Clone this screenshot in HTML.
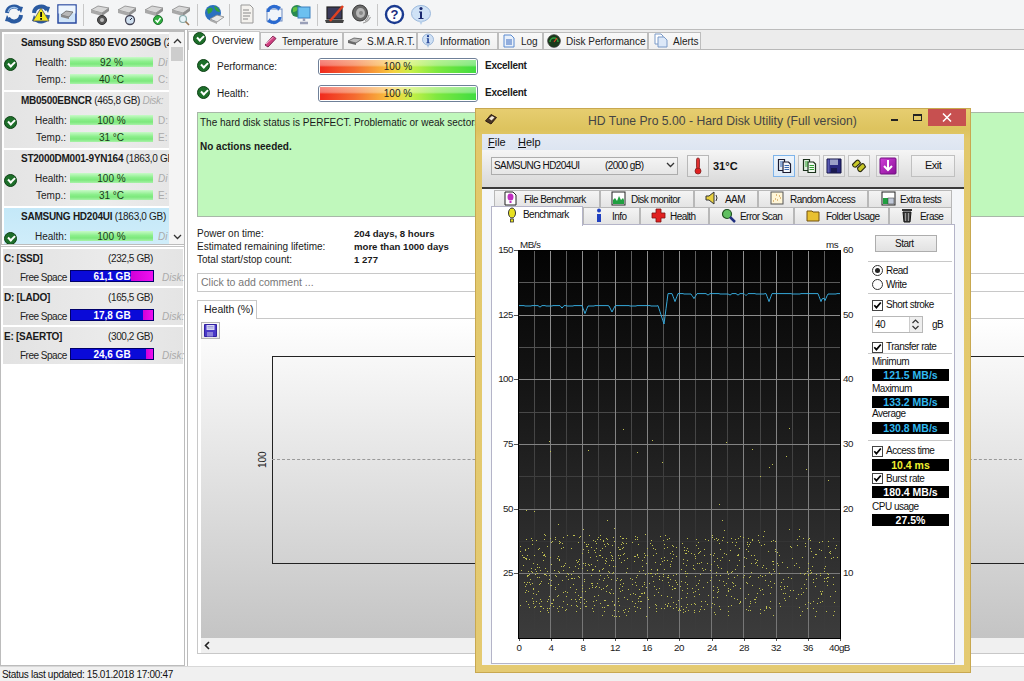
<!DOCTYPE html>
<html><head><meta charset="utf-8">
<style>
*{margin:0;padding:0;box-sizing:border-box}
html,body{width:1024px;height:681px;overflow:hidden;background:#fff;font-family:"Liberation Sans",sans-serif;color:#1a1a1a}
.a{position:absolute}
.t{position:absolute;white-space:nowrap;line-height:1}
/* toolbar */
#tb{left:0;top:0;width:1024px;height:30px;background:#f4f5f6;border-bottom:1px solid #bcbcbc}
.sep{position:absolute;top:4px;width:1px;height:22px;background:#c8c8c8}
/* left */
#lp{left:0;top:30px;width:185px;height:636px;background:#fff;border:1px solid #bcbcbc}
.ent{position:absolute;left:3px;width:164px;background:#e7e7e7}
.chk{position:absolute;width:13px;height:13px;border-radius:50%;background:#1d6f2a;border:1px solid #0e4216}
.chk:after{content:"";position:absolute;left:3px;top:2px;width:5px;height:3px;border-left:2px solid #fff;border-bottom:2px solid #fff;transform:rotate(-45deg)}
.gb{position:absolute;height:10px;background:linear-gradient(#c8fac8,#8cef8c 45%,#7ce87c 70%,#a8f2a8)}
.gb span{position:absolute;left:0;right:0;top:0px;text-align:center;font-size:10px;color:#1a3a1a;line-height:11px}
.bn{font-size:10px;font-weight:bold;letter-spacing:-0.25px}
.lbl{font-size:10px;color:#222}
.dk{font-size:10px;color:#aaa;font-style:italic}
.vb{position:absolute;height:12px;background:#0a0ad8;border:1px solid #00006a}
.vb span{position:absolute;left:0;right:0;top:0;text-align:center;font-size:10px;font-weight:bold;color:#fff;line-height:11px}
.mg{position:absolute;top:0;bottom:0;right:0;background:linear-gradient(90deg,#d000d8,#f010f0)}
.sz{font-weight:normal;letter-spacing:-0.3px}
#rp{left:187px;top:30px;width:837px;height:636px;background:#fff;border-left:1px solid #bcbcbc}
.tab{position:absolute;top:32px;height:17px;background:linear-gradient(#f8f8f8,#f0f0f0);border:1px solid #bdbdbd;border-bottom:none}
.ptxt{font-size:10px;color:#222}
.pb{width:160px;height:17px;border:1px solid #6f8098;border-radius:3px;padding:1px;background:#fff}
.pb:before{content:"";position:absolute;left:1px;top:1px;right:1px;bottom:1px;background:linear-gradient(rgba(255,255,255,0.45),rgba(255,255,255,0.35) 40%,rgba(255,255,255,0) 55%),linear-gradient(90deg,#f02a1e 0%,#f46a30 22%,#f8a83a 38%,#f6d040 47%,#c8f048 58%,#7ee840 75%,#40dc40 100%)}
.pb span{position:absolute;left:0;right:0;top:2px;z-index:1;text-align:center;font-size:10px;color:#222}
.htab{position:absolute;height:17px;background:linear-gradient(#f4f4f4,#e4e4e4);border:1px solid #b8b8b8;border-bottom:none}
.ht{font-size:10px;color:#111;letter-spacing:-0.55px}
.cl{font-size:9.8px;color:#1a1a1a;letter-spacing:-0.5px}
.sp{font-size:10px;color:#111;letter-spacing:-0.5px}
.hl{left:868px;width:84px;height:1px;background:#c8c8c8}
.cb{position:absolute;left:872px;width:11px;height:11px;border:1px solid #444;background:#fff}

.bx{position:absolute;left:872px;width:77px;height:12px;background:#000;font-size:10.5px;font-weight:bold;text-align:center;line-height:12px}
#status{left:0;top:666px;width:1024px;height:15px;background:#f0f0f0;border-top:1px solid #d8d8d8}
</style></head><body>

<!-- toolbar -->
<div id="tb" class="a">
 <div class="sep" style="left:83px"></div>
 <div class="sep" style="left:197px"></div>
 <div class="sep" style="left:229px"></div>
 <div class="sep" style="left:317px"></div>
 <div class="sep" style="left:377px"></div>
</div>

<!-- toolbar icons -->
<svg class="a" style="left:3px;top:3px" width="22" height="22" viewBox="0 0 22 22"><path d="M4 10 A7 7 0 0 1 17 7" stroke="#2a5aa0" stroke-width="4" fill="none"/><path d="M14 3 L20 4 L18 10 Z" fill="#2a5aa0"/><path d="M18 12 A7 7 0 0 1 5 15" stroke="#2a5aa0" stroke-width="4" fill="none"/><path d="M8 19 L2 18 L4 12 Z" fill="#2a5aa0"/><path d="M5 9 A6 6 0 0 1 15 6" stroke="#9ac0e8" stroke-width="1.2" fill="none"/></svg>
<svg class="a" style="left:30px;top:3px" width="22" height="22" viewBox="0 0 22 22"><path d="M4 10 A7 7 0 0 1 17 7" stroke="#2a5aa0" stroke-width="4" fill="none"/><path d="M14 3 L20 4 L18 10 Z" fill="#2a5aa0"/><path d="M18 12 A7 7 0 0 1 5 15" stroke="#2a5aa0" stroke-width="4" fill="none"/><path d="M8 19 L2 18 L4 12 Z" fill="#2a5aa0"/><path d="M11 5 L19 18 L3 18 Z" fill="#f2e820" stroke="#555" stroke-width="0.8"/><rect x="10.2" y="9" width="1.8" height="5" fill="#111"/><rect x="10.2" y="15" width="1.8" height="1.8" fill="#111"/></svg>
<svg class="a" style="left:57px;top:4px" width="20" height="20" viewBox="0 0 20 20"><rect x="1" y="1" width="18" height="18" fill="#cfe4f8" stroke="#2a4aa0" stroke-width="1.5"/><rect x="1.5" y="1.5" width="17" height="8" fill="#eef6fe"/><path d="M4 11 L9 7 L16 8 L12 13 Z" fill="#b8b8b8" stroke="#666" stroke-width="0.8"/><path d="M4 11 L12 13 L12 15 L4 13 Z" fill="#888"/></svg>
<svg class="a" style="left:89px;top:3px" width="22" height="23" viewBox="0 0 22 23"><path d="M2 7 L9 3 L20 5 L13 10 Z" fill="#d8d8d8" stroke="#888" stroke-width="0.8"/><path d="M2 7 L13 10 L13 13 L2 10 Z" fill="#a8a8a8"/><path d="M13 10 L20 5 L20 8 L13 13 Z" fill="#909090"/><circle cx="13" cy="17" r="4.5" fill="#555" stroke="#333"/><circle cx="13" cy="17" r="2" fill="#bbb"/></svg>
<svg class="a" style="left:116px;top:3px" width="22" height="23" viewBox="0 0 22 23"><path d="M2 7 L9 3 L20 5 L13 10 Z" fill="#d8d8d8" stroke="#888" stroke-width="0.8"/><path d="M2 7 L13 10 L13 13 L2 10 Z" fill="#a8a8a8"/><path d="M13 10 L20 5 L20 8 L13 13 Z" fill="#909090"/><circle cx="14" cy="17" r="4.5" fill="#cfe0f0" stroke="#445" stroke-width="1.3"/><path d="M14 17 L16 15" stroke="#223" stroke-width="1"/></svg>
<svg class="a" style="left:143px;top:3px" width="22" height="23" viewBox="0 0 22 23"><path d="M2 7 L9 3 L20 5 L13 10 Z" fill="#d8d8d8" stroke="#888" stroke-width="0.8"/><path d="M2 7 L13 10 L13 13 L2 10 Z" fill="#a8a8a8"/><path d="M13 10 L20 5 L20 8 L13 13 Z" fill="#909090"/><circle cx="15" cy="17" r="4.5" fill="#30b040" stroke="#207030"/><path d="M12.5 17 L14.5 19 L17.5 15" stroke="#fff" stroke-width="1.5" fill="none"/></svg>
<svg class="a" style="left:170px;top:3px" width="22" height="23" viewBox="0 0 22 23"><path d="M2 7 L9 3 L20 5 L13 10 Z" fill="#d8d8d8" stroke="#888" stroke-width="0.8"/><path d="M2 7 L13 10 L13 13 L2 10 Z" fill="#a8a8a8"/><path d="M13 10 L20 5 L20 8 L13 13 Z" fill="#909090"/><circle cx="13" cy="16" r="3.5" fill="#e8f4f8" stroke="#8aa" stroke-width="1.2"/><path d="M15.5 18.5 L19 22" stroke="#997755" stroke-width="1.6"/></svg>
<svg class="a" style="left:203px;top:3px" width="22" height="23" viewBox="0 0 22 23"><circle cx="10" cy="10" r="8" fill="#2a70c0"/><path d="M4 6 Q8 3 10 6 Q9 10 5 11 Z M11 3 Q16 4 17 9 Q13 9 12 6Z" fill="#30a040"/><path d="M7 16 L14 12 L21 14 L14 19 Z" fill="#e8e8e8" stroke="#888" stroke-width="0.8"/><path d="M7 16 L14 19 L14 21 L7 18 Z" fill="#aaa"/></svg>
<svg class="a" style="left:240px;top:4px" width="14" height="20" viewBox="0 0 14 20"><path d="M1 1 H10 L13 4 V19 H1 Z" fill="#f4f2ee" stroke="#999"/><path d="M3 6H9M3 9H11M3 12H10M3 15H8" stroke="#888" stroke-width="1.2"/></svg>
<svg class="a" style="left:264px;top:3px" width="20" height="22" viewBox="0 0 20 22"><rect x="3" y="6" width="15" height="12" fill="#f0f4fa" stroke="#6a8ac0"/><path d="M4 9 A6 6 0 0 1 14 5" stroke="#2a6ad0" stroke-width="3" fill="none"/><path d="M12 2 L17 4 L14 8Z" fill="#2a6ad0"/><path d="M16 14 A6 6 0 0 1 6 18" stroke="#2a6ad0" stroke-width="3" fill="none"/><path d="M8 21 L3 19 L6 15Z" fill="#2a6ad0"/></svg>
<svg class="a" style="left:290px;top:3px" width="22" height="22" viewBox="0 0 22 22"><circle cx="7" cy="8" r="6" fill="#2a8a50"/><path d="M3 5 Q6 3 8 5 Q7 9 3 9Z" fill="#60c040"/><rect x="8" y="4" width="12" height="11" fill="#6cc0f0" stroke="#3a80c0"/><path d="M14 15 V18 M10 20 H18" stroke="#9aa0b8" stroke-width="2.5"/></svg>
<svg class="a" style="left:325px;top:3px" width="20" height="22" viewBox="0 0 20 22"><rect x="2" y="4" width="15" height="12" fill="#3a3a5a" stroke="#222" stroke-width="1.2"/><path d="M0 17 H19 L18 20 H1Z" fill="#444"/><path d="M5 18 L18 3" stroke="#e04020" stroke-width="2.5"/></svg>
<svg class="a" style="left:351px;top:4px" width="20" height="20" viewBox="0 0 20 20"><ellipse cx="9" cy="9" rx="7.5" ry="8" fill="#6a6a6a" stroke="#3a3a3a"/><ellipse cx="9.5" cy="9" rx="4.5" ry="5" fill="#b8b8b8"/><circle cx="10" cy="9" r="2" fill="#888"/><path d="M14 17 Q17 15 18 11 M12 19 Q17 18 19.5 13" stroke="#a0a0a0" stroke-width="1.2" fill="none"/></svg>
<svg class="a" style="left:384px;top:4px" width="21" height="21" viewBox="0 0 21 21"><circle cx="10.5" cy="10.5" r="8.5" fill="#fff" stroke="#1a3a90" stroke-width="2.4"/><text x="10.5" y="15" text-anchor="middle" font-family="Liberation Sans" font-weight="bold" font-size="13" fill="#1a2a80">?</text></svg>
<svg class="a" style="left:410px;top:4px" width="22" height="22" viewBox="0 0 22 22"><ellipse cx="11" cy="9.5" rx="9.5" ry="8" fill="#cfe2f6" stroke="#9ab8dc"/><path d="M9 17 L11 21 L13 17Z" fill="#b8d0ea"/><circle cx="11" cy="4.5" r="1.6" fill="#1a2a70"/><path d="M9 7.5H12V14H13.5V15H8.5V14H10V8.5H9Z" fill="#1a2a70"/></svg>

<!-- left panel -->
<div id="lp" class="a"></div>
<div class="a" style="left:1px;top:31px;width:184px;height:214px;border:1px solid #bcbcbc;background:#fff;overflow:hidden">
<div class="a" style="left:2px;top:2px;width:165px;height:56px;background:linear-gradient(90deg,#e4e4e4,#ececec 60%,#e6e6e6)"></div>
<div class="t bn" style="left:19px;top:6px">Samsung SSD 850 EVO 250GB <span class="sz">(232,9 GB)</span></div>
<div class="chk" style="left:2px;top:26px"></div>
<div class="t lbl" style="left:33px;top:26px">Health:</div>
<div class="gb" style="left:68px;top:25px;width:83px"><span>92 %</span></div>
<div class="t dk" style="left:156px;top:26px;">Di</div>
<div class="t lbl" style="left:34px;top:43px">Temp.:</div>
<div class="gb" style="left:68px;top:42px;width:83px"><span>40 °C</span></div>
<div class="t dk" style="left:156px;top:43px;font-style:normal;">C:</div>
<div class="a" style="left:2px;top:60px;width:165px;height:56px;background:linear-gradient(90deg,#e4e4e4,#ececec 60%,#e6e6e6)"></div>
<div class="t bn" style="left:19px;top:64px">MB0500EBNCR <span class="sz">(465,8 GB) <i style="color:#aaa">Disk:</i></span></div>
<div class="chk" style="left:2px;top:84px"></div>
<div class="t lbl" style="left:33px;top:84px">Health:</div>
<div class="gb" style="left:68px;top:83px;width:83px"><span>100 %</span></div>
<div class="t dk" style="left:156px;top:84px;font-style:normal;">D:</div>
<div class="t lbl" style="left:34px;top:101px">Temp.:</div>
<div class="gb" style="left:68px;top:100px;width:83px"><span>31 °C</span></div>
<div class="t dk" style="left:156px;top:101px;font-style:normal;">E:</div>
<div class="a" style="left:2px;top:118px;width:165px;height:56px;background:linear-gradient(90deg,#e4e4e4,#ececec 60%,#e6e6e6)"></div>
<div class="t bn" style="left:19px;top:122px">ST2000DM001-9YN164 <span class="sz">(1863,0 GB)</span></div>
<div class="chk" style="left:2px;top:142px"></div>
<div class="t lbl" style="left:33px;top:142px">Health:</div>
<div class="gb" style="left:68px;top:141px;width:83px"><span>100 %</span></div>
<div class="t dk" style="left:156px;top:142px;">Di</div>
<div class="t lbl" style="left:34px;top:159px">Temp.:</div>
<div class="gb" style="left:68px;top:158px;width:83px"><span>31 °C</span></div>
<div class="t dk" style="left:156px;top:159px;font-style:normal;">E:</div>
<div class="a" style="left:2px;top:176px;width:165px;height:56px;background:linear-gradient(#c4e8f8,#d6f0fb)"></div>
<div class="t bn" style="left:19px;top:180px">SAMSUNG HD204UI <span class="sz">(1863,0 GB)</span></div>
<div class="chk" style="left:2px;top:200px"></div>
<div class="t lbl" style="left:33px;top:200px">Health:</div>
<div class="gb" style="left:68px;top:199px;width:83px"><span>100 %</span></div>
<div class="t dk" style="left:156px;top:200px;">Di</div>
<div class="t lbl" style="left:34px;top:217px">Temp.:</div>
<div class="gb" style="left:68px;top:216px;width:83px"><span>31 °C</span></div>
<div class="t dk" style="left:156px;top:217px;font-style:normal;">E:</div>
<div class="a" style="left:167px;top:0;width:16px;height:212px;background:#f4f4f4"></div>
<div class="a" style="left:169px;top:15px;width:12px;height:14px;background:#cdcdcd"></div>
<svg class="a" style="left:171px;top:6px" width="9" height="6" viewBox="0 0 9 6"><path d="M1 5L4.5 1.5L8 5" stroke="#333" stroke-width="1.3" fill="none"/></svg>
<svg class="a" style="left:171px;top:202px" width="9" height="6" viewBox="0 0 9 6"><path d="M1 1L4.5 4.5L8 1" stroke="#333" stroke-width="1.3" fill="none"/></svg>
</div>
<!-- volumes -->
<div class="a" style="left:1px;top:246px;width:184px;height:120px;border-top:1px solid #c4c4c4"></div>
<div class="a" style="left:3px;top:249px;width:180px;height:37px;background:linear-gradient(90deg,#e2e2e2,#ebebeb 60%,#e4e4e4)"></div>
<div class="t bn" style="left:4px;top:254px">C: [SSD]</div>
<div class="t lbl" style="left:103px;width:50px;text-align:right;top:254px;letter-spacing:-0.4px">(232,5 GB)</div>
<div class="t lbl" style="left:20px;top:273px;letter-spacing:-0.5px">Free Space</div>
<div class="vb" style="left:70px;top:270px;width:84px"><div class="mg" style="width:22px"></div><span>61,1 GB</span></div>
<div class="t dk" style="left:162px;top:273px">Disk:</div>
<div class="a" style="left:3px;top:288px;width:180px;height:37px;background:linear-gradient(90deg,#e2e2e2,#ebebeb 60%,#e4e4e4)"></div>
<div class="t bn" style="left:4px;top:293px">D: [LADO]</div>
<div class="t lbl" style="left:103px;width:50px;text-align:right;top:293px;letter-spacing:-0.4px">(165,5 GB)</div>
<div class="t lbl" style="left:20px;top:312px;letter-spacing:-0.5px">Free Space</div>
<div class="vb" style="left:70px;top:309px;width:84px"><div class="mg" style="width:10px"></div><span>17,8 GB</span></div>
<div class="t dk" style="left:162px;top:312px">Disk:</div>
<div class="a" style="left:3px;top:327px;width:180px;height:37px;background:linear-gradient(90deg,#e2e2e2,#ebebeb 60%,#e4e4e4)"></div>
<div class="t bn" style="left:4px;top:332px">E: [SAERTO]</div>
<div class="t lbl" style="left:103px;width:50px;text-align:right;top:332px;letter-spacing:-0.4px">(300,2 GB)</div>
<div class="t lbl" style="left:20px;top:351px;letter-spacing:-0.5px">Free Space</div>
<div class="vb" style="left:70px;top:348px;width:84px"><div class="mg" style="width:7px"></div><span>24,6 GB</span></div>
<div class="t dk" style="left:162px;top:351px">Disk:</div>

<!-- right panel -->
<div id="rp" class="a"></div>
<!-- tabs -->
<div class="a" style="left:188px;top:30px;width:836px;height:19px;background:#ececec"></div>
<div class="a" style="left:188px;top:49px;width:836px;height:1px;background:#b8b8b8"></div>
<div class="tab" style="left:260px;width:83px"></div>
<div class="tab" style="left:343px;width:74px"></div>
<div class="tab" style="left:417px;width:81px"></div>
<div class="tab" style="left:498px;width:45px"></div>
<div class="tab" style="left:543px;width:105px"></div>
<div class="tab" style="left:648px;width:53px"></div>
<div class="a" style="left:188px;top:31px;width:72px;height:19px;background:#fff;border:1px solid #c9c9c9;border-bottom:none"></div>
<div class="chk" style="left:193px;top:32px"></div>
<div class="t ptxt" style="left:212px;top:36px">Overview</div>
<div class="t ptxt" style="left:282px;top:37px">Temperature</div>
<div class="t ptxt" style="left:367px;top:37px">S.M.A.R.T.</div>
<div class="t ptxt" style="left:440px;top:37px">Information</div>
<div class="t ptxt" style="left:521px;top:37px">Log</div>
<div class="t ptxt" style="left:566px;top:37px">Disk Performance</div>
<div class="t ptxt" style="left:673px;top:37px">Alerts</div>
<svg class="a" style="left:263px;top:34px" width="15" height="14" viewBox="0 0 15 14"><path d="M2 11 L10 2 L13 4.5 L5 13 Z" fill="#d04080" stroke="#802050" stroke-width="1"/><path d="M3 10 L10.5 3" stroke="#f8b0d0" stroke-width="1"/></svg>
<svg class="a" style="left:347px;top:36px" width="16" height="10" viewBox="0 0 16 10"><path d="M1 5 L7 2 L15 3 L9 7 Z" fill="#bbb" stroke="#555" stroke-width="0.8"/><path d="M1 5 L9 7 L9 9 L1 7Z" fill="#666"/></svg>
<svg class="a" style="left:422px;top:33px" width="12" height="15" viewBox="0 0 12 15"><ellipse cx="6" cy="6.5" rx="5.5" ry="5.5" fill="#cfe0f4" stroke="#8aaad0" stroke-width="0.8"/><path d="M5 12 L6 15 L7 12Z" fill="#9ab8dc"/><circle cx="6" cy="3.2" r="1.1" fill="#1a3a90"/><path d="M4.8 5.2H6.8V9.5H7.8V10.3H4.3V9.5H5.3V6H4.8Z" fill="#1a3a90"/></svg>
<svg class="a" style="left:503px;top:34px" width="12" height="14" viewBox="0 0 12 14"><path d="M1 1H8L11 4V13H1Z" fill="#e8f0fa" stroke="#5a8ad0"/><path d="M3 6H9M3 8H9M3 10H9" stroke="#3a6ac0"/></svg>
<svg class="a" style="left:547px;top:34px" width="14" height="14" viewBox="0 0 14 14"><circle cx="7" cy="7" r="6.3" fill="#1a3a1a" stroke="#333" stroke-width="0.8"/><path d="M3 8 A4 4 0 0 1 11 8" stroke="#30a040" stroke-width="1.5" fill="none"/><path d="M7 8 L10 4" stroke="#e04020" stroke-width="1.2"/></svg>
<svg class="a" style="left:654px;top:33px" width="14" height="15" viewBox="0 0 14 15"><path d="M1 1H7L9 3V11H1Z" fill="#fff" stroke="#7a9ac8"/><path d="M4 4H10L13 7V14H4Z" fill="#dce8f8" stroke="#7a9ac8"/></svg>
<div class="chk" style="left:197px;top:59px"></div>
<div class="t" style="left:217px;top:62px;font-size:10px">Performance:</div>
<div class="pb a" style="left:318px;top:58px"><span>100 %</span></div>
<div class="t" style="left:485px;top:61px;font-size:10px;font-weight:bold;letter-spacing:-0.25px">Excellent</div>
<div class="chk" style="left:197px;top:86px"></div>
<div class="t" style="left:217px;top:89px;font-size:10px">Health:</div>
<div class="pb a" style="left:318px;top:85px"><span>100 %</span></div>
<div class="t" style="left:485px;top:88px;font-size:10px;font-weight:bold;letter-spacing:-0.25px">Excellent</div>

<div class="a" style="left:197px;top:112px;width:840px;height:105px;background:#c0f8bc;border:1px solid #a8b8a8"></div>
<div class="t" style="left:200px;top:118px;font-size:10px">The hard disk status is PERFECT. Problematic or weak sectors were not found.</div>
<div class="t" style="left:200px;top:142px;font-size:10px;font-weight:bold">No actions needed.</div>

<div class="t" style="left:197px;top:229px;font-size:10px">Power on time:</div>
<div class="t" style="left:197px;top:242px;font-size:10px">Estimated remaining lifetime:</div>
<div class="t" style="left:197px;top:255px;font-size:10px">Total start/stop count:</div>
<div class="t" style="left:354px;top:229px;font-size:9.6px;font-weight:bold">204 days, 8 hours</div>
<div class="t" style="left:354px;top:242px;font-size:9.6px;font-weight:bold">more than 1000 days</div>
<div class="t" style="left:354px;top:255px;font-size:9.6px;font-weight:bold">1 277</div>

<div class="a" style="left:197px;top:273px;width:840px;height:19px;border:1px solid #c8c8c8;background:#fff"></div>
<div class="t" style="left:201px;top:277px;font-size:10.5px;color:#777">Click to add comment ...</div>

<!-- health chart -->
<div class="a" style="left:197px;top:318px;width:840px;height:336px;border:1px solid #c8c8c8;background:#fff"></div>
<div class="a" style="left:197px;top:300px;width:60px;height:19px;border:1px solid #c8c8c8;border-bottom:none;background:#fff"></div>
<div class="t" style="left:204px;top:304px;font-size:10.5px">Health (%)</div>
<div class="a" style="left:201px;top:319px;width:823px;height:319px;background:linear-gradient(#fff,#fafafa 8%,#c4c4c4)"></div>
<div class="a" style="left:201px;top:322px;width:19px;height:17px;border:1px solid #b4b4b4;background:linear-gradient(#fafafa,#e8e8e8)"></div>
<svg class="a" style="left:204px;top:324px" width="13" height="13" viewBox="0 0 13 13"><path d="M0.5 0.5H12.5V12.5H0.5Z" fill="#4a3ac8" stroke="#3020a0"/><rect x="2.5" y="1" width="8" height="5" fill="#d8d8f4"/><path d="M3.5 2.5H9.5M3.5 4H9.5" stroke="#8a8ad0" stroke-width="0.7"/><rect x="3" y="8" width="6" height="4.5" fill="#8a80d8"/></svg>
<div class="a" style="left:272px;top:356px;width:760px;height:208px;border:1px solid #222"></div>
<div class="a" style="left:272px;top:459px;width:760px;height:0;border-top:1px dashed #999"></div>
<div class="t" style="left:258px;top:468px;font-size:10px;transform:rotate(-90deg);transform-origin:0 0;color:#222">100</div>
<div class="a" style="left:201px;top:638px;width:823px;height:15px;background:#f0f0f0"></div>
<svg class="a" style="left:204px;top:641px" width="6" height="9" viewBox="0 0 6 9"><path d="M5 1L1.5 4.5L5 8" stroke="#222" stroke-width="1.6" fill="none"/></svg>

<div id="status" class="a"><div class="t" style="left:2px;top:3px;font-size:10px;color:#111;letter-spacing:-0.3px">Status last updated: 15.01.2018 17:00:47</div></div>
<!-- HD TUNE WINDOW -->
<div class="a" style="left:475px;top:108px;width:496px;height:565px;background:linear-gradient(#e6cd70,#ddc35e 20px,#e2c86a 30px,#e4ca72);border:1px solid #c8a850"></div>
<div class="t" style="left:588px;top:115px;font-size:12.2px;color:#444">HD Tune Pro 5.00 - Hard Disk Utility (Full version)</div>
<!-- title icon -->
<svg class="a" style="left:484px;top:113px" width="14" height="13" viewBox="0 0 14 13"><path d="M1.5 8 L7 1.5 L12.5 4.5 L7 11 Z" fill="#4a3628" stroke="#2a1a10" stroke-width="1"/><path d="M5 5.5 L8 3 L10.5 4.5 L7.5 7.5 Z" fill="#f0e8d8"/></svg>
<div class="a" style="left:891px;top:119px;width:7px;height:2px;background:#222"></div>
<div class="a" style="left:913px;top:114px;width:9px;height:7px;border:1px solid #222;border-top-width:2px"></div>
<div class="a" style="left:928px;top:109px;width:38px;height:17px;background:#c75050"></div>
<svg class="a" style="left:942px;top:113px" width="10" height="9" viewBox="0 0 10 9"><path d="M1 0.5L9 8.5M9 0.5L1 8.5" stroke="#fff" stroke-width="1.5"/></svg>
<!-- client -->
<div class="a" style="left:482px;top:134px;width:482px;height:531px;background:#f7f9fb"></div>
<div class="a" style="left:482px;top:134px;width:482px;height:16px;background:linear-gradient(#e4eaf4,#dde5f1)"></div>
<div class="t" style="left:488px;top:137px;font-size:11px;color:#111"><u>F</u>ile</div>
<div class="t" style="left:518px;top:137px;font-size:11px;color:#111"><u>H</u>elp</div>
<div class="a" style="left:482px;top:150px;width:482px;height:39px;background:linear-gradient(#f5f5f5,#e0e0e0 70%,#d8d8d8);border-bottom:2px solid #3a3a3a"></div>
<!-- combo -->
<div class="a" style="left:491px;top:157px;width:187px;height:18px;background:linear-gradient(#f4f4f4,#e6e6e6);border:1px solid #acacac"></div>
<div class="t" style="left:494px;top:161px;font-size:10px;color:#111;letter-spacing:-0.6px">SAMSUNG HD204UI</div>
<div class="t" style="left:605px;top:161px;font-size:10px;color:#111;letter-spacing:-0.6px">(2000 gB)</div>
<svg class="a" style="left:666px;top:162px" width="9" height="6" viewBox="0 0 9 6"><path d="M1 1 L4.5 4.5 L8 1" stroke="#333" stroke-width="1.3" fill="none"/></svg>
<!-- temp button -->
<div class="a" style="left:687px;top:155px;width:22px;height:22px;background:linear-gradient(#f6f6f6,#e4e4e4);border:1px solid #b8b8b8"></div>
<svg class="a" style="left:692px;top:157px" width="12" height="18" viewBox="0 0 12 18"><rect x="4.5" y="1" width="3" height="11" rx="1.5" fill="#e03030" stroke="#802020" stroke-width="0.8"/><circle cx="6" cy="14" r="3" fill="#e02020" stroke="#802020" stroke-width="0.8"/></svg>
<div class="t" style="left:713px;top:161px;font-size:11px;font-weight:bold;color:#111">31°C</div>
<!-- tool buttons -->
<div class="a" style="left:773px;top:155px;width:22px;height:22px;background:linear-gradient(#eef5fc,#dce9f6);border:1px solid #7eb4ea"></div>
<div class="a" style="left:798px;top:155px;width:22px;height:22px;background:linear-gradient(#f6f6f6,#e4e4e4);border:1px solid #c4c4c4"></div>
<div class="a" style="left:823px;top:155px;width:22px;height:22px;background:linear-gradient(#f6f6f6,#e4e4e4);border:1px solid #c4c4c4"></div>
<div class="a" style="left:848px;top:155px;width:22px;height:22px;background:linear-gradient(#f6f6f6,#e4e4e4);border:1px solid #c4c4c4"></div>
<div class="a" style="left:876px;top:155px;width:23px;height:22px;background:linear-gradient(#f6f6f6,#e4e4e4);border:1px solid #c4c4c4"></div>
<svg class="a" style="left:777px;top:158px" width="15" height="16" viewBox="0 0 15 16"><path d="M1.5 1.5H7.5V12.5H1.5Z" fill="#e8f0f8" stroke="#1a1a30" stroke-width="1.2"/><path d="M6 4H11.5L13.5 6V14.5H6Z" fill="#f4f8fc" stroke="#1a1a30" stroke-width="1.2"/><path d="M3 4H6M3 6H6M3 8H6M7.5 7.5H12M7.5 9.5H12M7.5 11.5H12" stroke="#3a6ab0" stroke-width="1"/></svg>
<svg class="a" style="left:802px;top:158px" width="15" height="16" viewBox="0 0 15 16"><path d="M1.5 1.5H7.5V12.5H1.5Z" fill="#e0f0e0" stroke="#1a301a" stroke-width="1.2"/><path d="M6 4H11.5L13.5 6V14.5H6Z" fill="#f0f8f0" stroke="#1a301a" stroke-width="1.2"/><path d="M3 4H6M3 6H6M3 8H6M7.5 7.5H12M7.5 9.5H12M7.5 11.5H12" stroke="#30a030" stroke-width="1"/></svg>
<svg class="a" style="left:826px;top:158px" width="16" height="16" viewBox="0 0 16 16"><path d="M1 1H15V15H1Z" fill="#2a2a80" stroke="#101040"/><rect x="4" y="1.5" width="8" height="5.5" fill="#9aa0c8"/><rect x="5" y="10" width="6" height="5" fill="#1a1a50"/><rect x="1.5" y="1.5" width="2" height="13" fill="#5a5ab0"/></svg>
<svg class="a" style="left:851px;top:158px" width="16" height="16" viewBox="0 0 16 16"><path d="M1.5 6.5 L5.5 2.5 Q7.5 1.5 8.5 3.5 L9.5 5 L5 9 Q3 9.5 2 8Z" fill="#c8c828" stroke="#2a2a10" stroke-width="1.1"/><path d="M6.5 10 L10.5 6 Q12.5 5 13.5 7 L14.5 9 L10 13.5 Q8 14 7 12Z" fill="#c8c828" stroke="#2a2a10" stroke-width="1.1"/></svg>
<svg class="a" style="left:879px;top:157px" width="18" height="18" viewBox="0 0 18 18"><defs><linearGradient id="mgg" x1="0" y1="0" x2="1" y2="1"><stop offset="0" stop-color="#d040d8"/><stop offset="1" stop-color="#8a1098"/></linearGradient></defs><rect x="1" y="1" width="16" height="16" rx="1" fill="url(#mgg)" stroke="#701080"/><path d="M9 3v10M5 9l4 4 4-4" stroke="#fff" stroke-width="2" fill="none"/></svg>
<div class="a" style="left:911px;top:155px;width:44px;height:22px;background:linear-gradient(#f6f6f6,#e4e4e4);border:1px solid #c0c0c0"></div>
<div class="t" style="left:925px;top:160px;font-size:11px;color:#111;letter-spacing:-0.5px">Exit</div>

<!-- tabs -->
<div class="a" style="left:482px;top:189px;width:482px;height:476px;background:#f4f6f9"></div>
<div class="htab" style="left:494px;top:190px;width:106px"></div>
<div class="htab" style="left:600px;top:190px;width:94px"></div>
<div class="htab" style="left:694px;top:190px;width:64px"></div>
<div class="htab" style="left:758px;top:190px;width:110px"></div>
<div class="htab" style="left:868px;top:190px;width:84px"></div>
<div class="htab" style="left:583px;top:207px;width:57px"></div>
<div class="htab" style="left:640px;top:207px;width:69px"></div>
<div class="htab" style="left:709px;top:207px;width:85px"></div>
<div class="htab" style="left:794px;top:207px;width:95px"></div>
<div class="htab" style="left:889px;top:207px;width:63px"></div>
<div class="a" style="left:491px;top:224px;width:464px;height:440px;background:#fff;border:1px solid #b4b4c8"></div>
<div class="a" style="left:491px;top:206px;width:92px;height:20px;background:#fff;border:1px solid #b4b4c8;border-bottom:none"></div>
<div class="t ht" style="left:524px;top:195px">File Benchmark</div>
<div class="t ht" style="left:631px;top:195px">Disk monitor</div>
<div class="t ht" style="left:725px;top:195px">AAM</div>
<div class="t ht" style="left:790px;top:195px">Random Access</div>
<div class="t ht" style="left:900px;top:195px">Extra tests</div>
<div class="t ht" style="left:523px;top:210px">Benchmark</div>
<div class="t ht" style="left:612px;top:212px">Info</div>
<div class="t ht" style="left:670px;top:212px">Health</div>
<div class="t ht" style="left:740px;top:212px">Error Scan</div>
<div class="t ht" style="left:826px;top:212px">Folder Usage</div>
<div class="t ht" style="left:920px;top:212px">Erase</div>
<!-- tab icons -->
<svg class="a" style="left:504px;top:191px" width="13" height="15" viewBox="0 0 13 15"><path d="M1 1h8l3 3v10H1z" fill="#fff" stroke="#222"/><ellipse cx="6.5" cy="6" rx="3" ry="3.5" fill="#c030c0"/><rect x="5.5" y="10" width="2" height="2" fill="#c030c0"/></svg>
<svg class="a" style="left:611px;top:191px" width="15" height="15" viewBox="0 0 15 15"><rect x="1" y="1" width="13" height="13" fill="#fff" stroke="#222"/><path d="M2 13V9l2-2 2 3 2-5 2 4 2-2 1 2v4z" fill="#20a040"/></svg>
<svg class="a" style="left:705px;top:191px" width="15" height="14" viewBox="0 0 15 14"><path d="M1 5h3l5-4v12l-5-4H1z" fill="#e8d040" stroke="#333"/><path d="M11 4q2 3 0 6" stroke="#333" fill="none"/></svg>
<svg class="a" style="left:770px;top:191px" width="14" height="14" viewBox="0 0 14 14"><rect x="1" y="1" width="12" height="12" fill="#fff6d8" stroke="#555"/><path d="M3 10h1M5 8h1M7 9h1M9 5h1M10 7h1M6 4h1" stroke="#c08020"/></svg>
<svg class="a" style="left:881px;top:191px" width="15" height="15" viewBox="0 0 15 15"><rect x="1" y="1" width="13" height="13" fill="#fff" stroke="#222"/><rect x="2" y="7" width="6" height="6" fill="#20a040"/><rect x="7" y="7" width="6" height="6" fill="#c0c8d8" stroke="#333" stroke-width="0.5"/></svg>
<svg class="a" style="left:507px;top:207px" width="10" height="16" viewBox="0 0 10 16"><ellipse cx="5" cy="6" rx="3.5" ry="5" fill="#e8e020" stroke="#333"/><rect x="3.5" y="12" width="3" height="3" fill="#e8e020" stroke="#333" stroke-width="0.8"/></svg>
<svg class="a" style="left:595px;top:208px" width="8" height="15" viewBox="0 0 8 15"><circle cx="4" cy="2.5" r="2" fill="#2040c0"/><rect x="2" y="6" width="4" height="8" fill="#2040c0"/></svg>
<svg class="a" style="left:651px;top:208px" width="15" height="15" viewBox="0 0 15 15"><path d="M5 1h5v4h4v5h-4v4H5v-4H1V5h4z" fill="#e02020" stroke="#801010" stroke-width="0.8"/></svg>
<svg class="a" style="left:721px;top:208px" width="15" height="15" viewBox="0 0 15 15"><circle cx="6" cy="6" r="4.5" fill="#60c060" stroke="#205020" stroke-width="1.2"/><path d="M9 9l5 5" stroke="#203080" stroke-width="2.5"/></svg>
<svg class="a" style="left:806px;top:208px" width="14" height="14" viewBox="0 0 14 14"><path d="M1 3h5l1 1h6v9H1z" fill="#e8c030" stroke="#705010"/></svg>
<svg class="a" style="left:901px;top:208px" width="12" height="15" viewBox="0 0 12 15"><rect x="1" y="1" width="10" height="2" fill="#333"/><path d="M2 4h8l-1 10H3z" fill="#444" stroke="#111"/><path d="M4.5 5v8M7.5 5v8" stroke="#999"/></svg>

<!-- chart labels -->
<div class="t cl" style="left:520px;top:240px">MB/s</div>
<div class="t cl" style="left:826px;top:240px">ms</div>
<div class="t cl" style="left:478px;width:35px;text-align:right;top:245px">150</div>
<div class="t cl" style="left:843px;top:245px">60</div>
<div class="a" style="left:514px;top:250px;width:4px;height:1px;background:#555"></div>
<div class="t cl" style="left:478px;width:35px;text-align:right;top:310px">125</div>
<div class="t cl" style="left:843px;top:310px">50</div>
<div class="a" style="left:514px;top:315px;width:4px;height:1px;background:#555"></div>
<div class="t cl" style="left:478px;width:35px;text-align:right;top:374px">100</div>
<div class="t cl" style="left:843px;top:374px">40</div>
<div class="a" style="left:514px;top:379px;width:4px;height:1px;background:#555"></div>
<div class="t cl" style="left:478px;width:35px;text-align:right;top:439px">75</div>
<div class="t cl" style="left:843px;top:439px">30</div>
<div class="a" style="left:514px;top:444px;width:4px;height:1px;background:#555"></div>
<div class="t cl" style="left:478px;width:35px;text-align:right;top:504px">50</div>
<div class="t cl" style="left:843px;top:504px">20</div>
<div class="a" style="left:514px;top:509px;width:4px;height:1px;background:#555"></div>
<div class="t cl" style="left:478px;width:35px;text-align:right;top:568px">25</div>
<div class="t cl" style="left:843px;top:568px">10</div>
<div class="a" style="left:514px;top:573px;width:4px;height:1px;background:#555"></div>
<div class="t cl" style="left:504px;width:30px;text-align:center;top:643px">0</div>
<div class="a" style="left:519px;top:638px;width:1px;height:3px;background:#555"></div>
<div class="t cl" style="left:536px;width:30px;text-align:center;top:643px">4</div>
<div class="a" style="left:551px;top:638px;width:1px;height:3px;background:#555"></div>
<div class="t cl" style="left:568px;width:30px;text-align:center;top:643px">8</div>
<div class="a" style="left:583px;top:638px;width:1px;height:3px;background:#555"></div>
<div class="t cl" style="left:600px;width:30px;text-align:center;top:643px">12</div>
<div class="a" style="left:615px;top:638px;width:1px;height:3px;background:#555"></div>
<div class="t cl" style="left:632px;width:30px;text-align:center;top:643px">16</div>
<div class="a" style="left:647px;top:638px;width:1px;height:3px;background:#555"></div>
<div class="t cl" style="left:664px;width:30px;text-align:center;top:643px">20</div>
<div class="a" style="left:679px;top:638px;width:1px;height:3px;background:#555"></div>
<div class="t cl" style="left:697px;width:30px;text-align:center;top:643px">24</div>
<div class="a" style="left:712px;top:638px;width:1px;height:3px;background:#555"></div>
<div class="t cl" style="left:729px;width:30px;text-align:center;top:643px">28</div>
<div class="a" style="left:744px;top:638px;width:1px;height:3px;background:#555"></div>
<div class="t cl" style="left:761px;width:30px;text-align:center;top:643px">32</div>
<div class="a" style="left:776px;top:638px;width:1px;height:3px;background:#555"></div>
<div class="t cl" style="left:793px;width:30px;text-align:center;top:643px">36</div>
<div class="a" style="left:808px;top:638px;width:1px;height:3px;background:#555"></div>
<div class="t cl" style="left:829px;top:643px">40gB</div>
<div class="a" style="left:840px;top:638px;width:1px;height:3px;background:#555"></div>
<svg class="a" style="left:518px;top:250px" width="323" height="389" viewBox="0 0 323 389" shape-rendering="crispEdges"><defs><linearGradient id="cg" x1="0" y1="0" x2="0" y2="1"><stop offset="0" stop-color="#030303"/><stop offset="0.35" stop-color="#151515"/><stop offset="0.7" stop-color="#2a2a2a"/><stop offset="1" stop-color="#3c3c3c"/></linearGradient></defs><rect x="0" y="0" width="323" height="389" fill="url(#cg)"/><defs><linearGradient id="gmin" gradientUnits="userSpaceOnUse" x1="0" y1="0" x2="0" y2="388"><stop offset="0" stop-color="#5e5e5e"/><stop offset="0.5" stop-color="#444"/><stop offset="0.75" stop-color="#343434"/><stop offset="1" stop-color="#3c3c3c"/></linearGradient><linearGradient id="gmaj" gradientUnits="userSpaceOnUse" x1="0" y1="0" x2="0" y2="388"><stop offset="0" stop-color="#909090"/><stop offset="1" stop-color="#767676"/></linearGradient></defs><path d="M16.5 0V388M48.5 0V388M80.5 0V388M113.5 0V388M145.5 0V388M177.5 0V388M209.5 0V388M242.5 0V388M274.5 0V388M306.5 0V388M0 32.5H322M0 97.5H322M0 162.5H322M0 226.5H322M0 291.5H322M0 356.5H322" stroke="url(#gmin)" stroke-width="1" fill="none"/><path d="M0.5 0V388M32.5 0V388M64.5 0V388M97.5 0V388M129.5 0V388M161.5 0V388M193.5 0V388M225.5 0V388M258.5 0V388M290.5 0V388M322.5 0V388M0 0.5H322M0 65.5H322M0 129.5H322M0 194.5H322M0 259.5H322M0 323.5H322M0 388.5H322" stroke="url(#gmaj)" stroke-width="1" fill="none"/><path d="M145 290h1v1h-1zM163 348h1v1h-1zM32 355h1v1h-1zM222 286h1v1h-1zM209 321h1v1h-1zM21 327h1v1h-1zM167 323h1v1h-1zM147 285h1v1h-1zM102 299h1v1h-1zM271 346h1v1h-1zM128 313h1v1h-1zM88 336h1v1h-1zM242 363h1v1h-1zM255 319h1v1h-1zM62 352h1v1h-1zM39 346h1v1h-1zM69 296h1v1h-1zM70 302h1v1h-1zM96 355h1v1h-1zM79 333h1v1h-1zM306 318h1v1h-1zM60 292h1v1h-1zM81 305h1v1h-1zM282 365h1v1h-1zM307 307h1v1h-1zM263 339h1v1h-1zM230 344h1v1h-1zM272 340h1v1h-1zM67 341h1v1h-1zM21 334h1v1h-1zM44 293h1v1h-1zM210 365h1v1h-1zM8 308h1v1h-1zM9 325h1v1h-1zM26 305h1v1h-1zM114 292h1v1h-1zM134 295h1v1h-1zM200 317h1v1h-1zM27 285h1v1h-1zM233 305h1v1h-1zM29 360h1v1h-1zM154 308h1v1h-1zM83 339h1v1h-1zM66 292h1v1h-1zM106 347h1v1h-1zM281 317h1v1h-1zM45 297h1v1h-1zM90 327h1v1h-1zM70 314h1v1h-1zM102 286h1v1h-1zM26 304h1v1h-1zM183 356h1v1h-1zM146 298h1v1h-1zM47 313h1v1h-1zM202 299h1v1h-1zM219 325h1v1h-1zM5 307h1v1h-1zM88 308h1v1h-1zM127 284h1v1h-1zM231 327h1v1h-1zM290 318h1v1h-1zM149 346h1v1h-1zM229 292h1v1h-1zM312 301h1v1h-1zM112 328h1v1h-1zM246 360h1v1h-1zM22 349h1v1h-1zM252 351h1v1h-1zM29 321h1v1h-1zM233 322h1v1h-1zM180 333h1v1h-1zM287 296h1v1h-1zM168 347h1v1h-1zM162 360h1v1h-1zM166 300h1v1h-1zM158 357h1v1h-1zM295 329h1v1h-1zM153 347h1v1h-1zM295 351h1v1h-1zM74 337h1v1h-1zM198 322h1v1h-1zM81 321h1v1h-1zM121 321h1v1h-1zM67 313h1v1h-1zM272 296h1v1h-1zM288 338h1v1h-1zM283 344h1v1h-1zM84 298h1v1h-1zM252 331h1v1h-1zM8 309h1v1h-1zM309 323h1v1h-1zM161 359h1v1h-1zM14 322h1v1h-1zM48 346h1v1h-1zM32 288h1v1h-1zM244 326h1v1h-1zM138 361h1v1h-1zM270 327h1v1h-1zM130 349h1v1h-1zM7 300h1v1h-1zM130 323h1v1h-1zM257 291h1v1h-1zM131 357h1v1h-1zM151 335h1v1h-1zM200 289h1v1h-1zM109 318h1v1h-1zM206 303h1v1h-1zM9 305h1v1h-1zM129 347h1v1h-1zM33 292h1v1h-1zM26 284h1v1h-1zM53 349h1v1h-1zM196 289h1v1h-1zM169 334h1v1h-1zM210 340h1v1h-1zM96 354h1v1h-1zM241 292h1v1h-1zM301 292h1v1h-1zM79 289h1v1h-1zM261 353h1v1h-1zM146 358h1v1h-1zM41 310h1v1h-1zM85 330h1v1h-1zM78 293h1v1h-1zM200 341h1v1h-1zM181 313h1v1h-1zM62 286h1v1h-1zM281 357h1v1h-1zM137 354h1v1h-1zM25 310h1v1h-1zM202 325h1v1h-1zM111 358h1v1h-1zM259 302h1v1h-1zM137 299h1v1h-1zM105 304h1v1h-1zM138 355h1v1h-1zM27 318h1v1h-1zM219 349h1v1h-1zM212 339h1v1h-1zM222 351h1v1h-1zM232 353h1v1h-1zM141 338h1v1h-1zM286 334h1v1h-1zM117 332h1v1h-1zM180 303h1v1h-1zM91 322h1v1h-1zM22 361h1v1h-1zM29 351h1v1h-1zM208 345h1v1h-1zM167 332h1v1h-1zM158 306h1v1h-1zM292 298h1v1h-1zM168 300h1v1h-1zM135 305h1v1h-1zM121 346h1v1h-1zM21 353h1v1h-1zM248 357h1v1h-1zM14 348h1v1h-1zM77 316h1v1h-1zM61 349h1v1h-1zM101 299h1v1h-1zM292 320h1v1h-1zM155 358h1v1h-1zM256 321h1v1h-1zM210 361h1v1h-1zM120 307h1v1h-1zM52 337h1v1h-1zM278 313h1v1h-1zM86 350h1v1h-1zM2 296h1v1h-1zM28 325h1v1h-1zM98 330h1v1h-1zM31 346h1v1h-1zM169 298h1v1h-1zM101 338h1v1h-1zM229 333h1v1h-1zM6 307h1v1h-1zM181 361h1v1h-1zM255 314h1v1h-1zM121 339h1v1h-1zM126 342h1v1h-1zM234 289h1v1h-1zM231 356h1v1h-1zM32 307h1v1h-1zM190 345h1v1h-1zM41 356h1v1h-1zM137 312h1v1h-1zM262 336h1v1h-1zM7 308h1v1h-1zM195 336h1v1h-1zM208 333h1v1h-1zM196 303h1v1h-1zM176 304h1v1h-1zM315 307h1v1h-1zM201 356h1v1h-1zM185 337h1v1h-1zM117 353h1v1h-1zM45 320h1v1h-1zM180 292h1v1h-1zM261 353h1v1h-1zM78 298h1v1h-1zM176 360h1v1h-1zM211 310h1v1h-1zM123 351h1v1h-1zM150 332h1v1h-1zM57 342h1v1h-1zM107 359h1v1h-1zM192 330h1v1h-1zM240 285h1v1h-1zM273 328h1v1h-1zM289 321h1v1h-1zM289 358h1v1h-1zM99 328h1v1h-1zM161 358h1v1h-1zM169 338h1v1h-1zM77 291h1v1h-1zM136 345h1v1h-1zM33 353h1v1h-1zM303 343h1v1h-1zM105 293h1v1h-1zM128 366h1v1h-1zM287 323h1v1h-1zM312 346h1v1h-1zM64 335h1v1h-1zM56 285h1v1h-1zM202 359h1v1h-1zM232 292h1v1h-1zM228 308h1v1h-1zM143 345h1v1h-1zM227 348h1v1h-1zM120 294h1v1h-1zM75 290h1v1h-1zM90 355h1v1h-1zM142 314h1v1h-1zM92 343h1v1h-1zM242 340h1v1h-1zM61 327h1v1h-1zM240 290h1v1h-1zM59 312h1v1h-1zM166 297h1v1h-1zM57 349h1v1h-1zM77 302h1v1h-1zM253 324h1v1h-1zM186 359h1v1h-1zM229 294h1v1h-1zM50 324h1v1h-1zM142 286h1v1h-1zM182 301h1v1h-1zM48 359h1v1h-1zM199 342h1v1h-1zM30 349h1v1h-1zM53 298h1v1h-1zM21 334h1v1h-1zM310 324h1v1h-1zM315 327h1v1h-1zM14 333h1v1h-1zM96 278h1v1h-1zM75 319h1v1h-1zM117 286h1v1h-1zM15 338h1v1h-1zM149 297h1v1h-1zM250 335h1v1h-1zM176 346h1v1h-1zM150 327h1v1h-1zM67 356h1v1h-1zM117 361h1v1h-1zM85 290h1v1h-1zM87 350h1v1h-1zM116 306h1v1h-1zM8 289h1v1h-1zM105 333h1v1h-1zM78 350h1v1h-1zM12 329h1v1h-1zM45 342h1v1h-1zM213 346h1v1h-1zM228 332h1v1h-1zM74 335h1v1h-1zM15 313h1v1h-1zM96 291h1v1h-1zM220 288h1v1h-1zM76 355h1v1h-1zM126 332h1v1h-1zM160 350h1v1h-1zM153 311h1v1h-1zM31 329h1v1h-1zM187 319h1v1h-1zM9 332h1v1h-1zM19 317h1v1h-1zM105 360h1v1h-1zM285 342h1v1h-1zM61 314h1v1h-1zM117 289h1v1h-1zM201 330h1v1h-1zM90 294h1v1h-1zM290 352h1v1h-1zM100 351h1v1h-1zM74 319h1v1h-1zM127 324h1v1h-1zM176 319h1v1h-1zM309 335h1v1h-1zM101 308h1v1h-1zM53 324h1v1h-1zM119 304h1v1h-1zM77 337h1v1h-1zM165 359h1v1h-1zM225 327h1v1h-1zM154 295h1v1h-1zM19 323h1v1h-1zM126 343h1v1h-1zM106 303h1v1h-1zM265 329h1v1h-1zM256 333h1v1h-1zM75 361h1v1h-1zM44 330h1v1h-1zM315 365h1v1h-1zM93 339h1v1h-1zM10 325h1v1h-1zM100 297h1v1h-1zM126 303h1v1h-1zM125 320h1v1h-1zM49 354h1v1h-1zM82 353h1v1h-1zM8 351h1v1h-1zM89 325h1v1h-1zM84 357h1v1h-1zM100 348h1v1h-1zM318 295h1v1h-1zM133 319h1v1h-1zM210 341h1v1h-1zM232 360h1v1h-1zM40 334h1v1h-1zM100 361h1v1h-1zM306 321h1v1h-1zM129 298h1v1h-1zM315 288h1v1h-1zM226 316h1v1h-1zM74 333h1v1h-1zM259 313h1v1h-1zM104 336h1v1h-1zM69 320h1v1h-1zM58 351h1v1h-1zM139 323h1v1h-1zM104 288h1v1h-1zM281 279h1v1h-1zM72 307h1v1h-1zM89 289h1v1h-1zM60 311h1v1h-1zM122 346h1v1h-1zM201 293h1v1h-1zM221 310h1v1h-1zM124 316h1v1h-1zM165 313h1v1h-1zM190 290h1v1h-1zM236 305h1v1h-1zM158 297h1v1h-1zM255 290h1v1h-1zM228 299h1v1h-1zM64 318h1v1h-1zM252 343h1v1h-1zM255 365h1v1h-1zM266 348h1v1h-1zM271 279h1v1h-1zM68 294h1v1h-1zM64 338h1v1h-1zM102 341h1v1h-1zM222 352h1v1h-1zM150 353h1v1h-1zM195 347h1v1h-1zM116 311h1v1h-1zM132 323h1v1h-1zM112 344h1v1h-1zM93 310h1v1h-1zM298 304h1v1h-1zM144 330h1v1h-1zM95 310h1v1h-1zM132 293h1v1h-1zM135 298h1v1h-1zM189 354h1v1h-1zM30 333h1v1h-1zM214 292h1v1h-1zM9 326h1v1h-1zM149 310h1v1h-1zM317 298h1v1h-1zM23 331h1v1h-1zM68 351h1v1h-1zM237 349h1v1h-1zM82 305h1v1h-1zM40 361h1v1h-1zM10 321h1v1h-1zM37 339h1v1h-1zM41 322h1v1h-1zM95 343h1v1h-1zM19 327h1v1h-1zM35 350h1v1h-1zM168 315h1v1h-1zM308 361h1v1h-1zM228 359h1v1h-1zM17 356h1v1h-1zM37 337h1v1h-1zM302 323h1v1h-1zM127 305h1v1h-1zM119 325h1v1h-1zM138 358h1v1h-1zM22 320h1v1h-1zM73 333h1v1h-1zM155 304h1v1h-1zM5 315h1v1h-1zM307 316h1v1h-1zM97 316h1v1h-1zM160 360h1v1h-1zM82 300h1v1h-1zM275 340h1v1h-1zM266 338h1v1h-1zM252 358h1v1h-1zM17 319h1v1h-1zM204 290h1v1h-1zM186 305h1v1h-1zM293 301h1v1h-1zM240 327h1v1h-1zM39 358h1v1h-1zM176 353h1v1h-1zM304 291h1v1h-1zM133 290h1v1h-1zM152 329h1v1h-1zM158 332h1v1h-1zM35 349h1v1h-1zM66 349h1v1h-1zM189 332h1v1h-1zM269 317h1v1h-1zM313 308h1v1h-1zM85 318h1v1h-1zM22 333h1v1h-1zM139 319h1v1h-1zM290 324h1v1h-1zM241 338h1v1h-1zM13 318h1v1h-1zM108 288h1v1h-1zM257 301h1v1h-1zM65 299h1v1h-1zM230 296h1v1h-1zM86 361h1v1h-1zM82 325h1v1h-1zM88 341h1v1h-1zM279 295h1v1h-1zM195 305h1v1h-1zM248 358h1v1h-1zM117 344h1v1h-1zM119 289h1v1h-1zM181 344h1v1h-1zM37 287h1v1h-1zM34 353h1v1h-1zM21 317h1v1h-1zM167 321h1v1h-1zM169 323h1v1h-1zM226 325h1v1h-1zM180 339h1v1h-1zM298 324h1v1h-1zM219 315h1v1h-1zM29 358h1v1h-1zM10 298h1v1h-1zM167 303h1v1h-1zM2 301h1v1h-1zM266 336h1v1h-1zM7 342h1v1h-1zM169 310h1v1h-1zM76 346h1v1h-1zM154 336h1v1h-1zM209 322h1v1h-1zM280 344h1v1h-1zM106 310h1v1h-1zM173 303h1v1h-1zM71 285h1v1h-1zM316 352h1v1h-1zM250 301h1v1h-1zM93 305h1v1h-1zM261 323h1v1h-1zM23 351h1v1h-1zM297 304h1v1h-1zM302 352h1v1h-1zM303 344h1v1h-1zM300 348h1v1h-1zM18 321h1v1h-1zM173 303h1v1h-1zM302 341h1v1h-1zM162 336h1v1h-1zM95 287h1v1h-1zM149 289h1v1h-1zM10 354h1v1h-1zM57 349h1v1h-1zM255 311h1v1h-1zM60 345h1v1h-1zM198 325h1v1h-1zM103 294h1v1h-1zM134 326h1v1h-1zM292 290h1v1h-1zM282 323h1v1h-1zM94 306h1v1h-1zM187 289h1v1h-1zM33 335h1v1h-1zM165 362h1v1h-1zM87 313h1v1h-1zM31 325h1v1h-1zM310 296h1v1h-1zM76 300h1v1h-1zM288 329h1v1h-1zM302 325h1v1h-1zM269 336h1v1h-1zM70 300h1v1h-1zM58 339h1v1h-1zM293 322h1v1h-1zM253 291h1v1h-1zM206 280h1v1h-1zM278 348h1v1h-1zM199 290h1v1h-1zM279 289h1v1h-1zM158 354h1v1h-1zM254 311h1v1h-1zM222 338h1v1h-1zM61 309h1v1h-1zM291 288h1v1h-1zM108 322h1v1h-1zM13 321h1v1h-1zM238 347h1v1h-1zM78 336h1v1h-1zM205 331h1v1h-1zM41 309h1v1h-1zM178 289h1v1h-1zM82 285h1v1h-1zM62 358h1v1h-1zM177 306h1v1h-1zM103 312h1v1h-1zM147 354h1v1h-1zM20 341h1v1h-1zM141 329h1v1h-1zM238 312h1v1h-1zM197 364h1v1h-1zM152 356h1v1h-1zM151 288h1v1h-1zM156 338h1v1h-1zM40 345h1v1h-1zM163 331h1v1h-1zM84 307h1v1h-1zM118 327h1v1h-1zM200 339h1v1h-1zM146 294h1v1h-1zM129 305h1v1h-1zM210 328h1v1h-1zM74 320h1v1h-1zM110 361h1v1h-1zM245 315h1v1h-1zM21 298h1v1h-1zM126 307h1v1h-1zM239 343h1v1h-1zM180 298h1v1h-1zM105 288h1v1h-1zM182 324h1v1h-1zM212 300h1v1h-1zM48 326h1v1h-1zM304 341h1v1h-1zM221 298h1v1h-1zM89 335h1v1h-1zM210 338h1v1h-1zM298 361h1v1h-1zM86 294h1v1h-1zM274 308h1v1h-1zM71 338h1v1h-1zM260 315h1v1h-1zM73 314h1v1h-1zM308 328h1v1h-1zM217 335h1v1h-1zM70 294h1v1h-1zM117 306h1v1h-1zM22 320h1v1h-1zM32 335h1v1h-1zM22 361h1v1h-1zM58 310h1v1h-1zM104 340h1v1h-1zM115 343h1v1h-1zM85 338h1v1h-1zM87 296h1v1h-1zM164 293h1v1h-1zM199 308h1v1h-1zM133 323h1v1h-1zM170 301h1v1h-1zM73 297h1v1h-1zM199 347h1v1h-1zM146 319h1v1h-1zM267 343h1v1h-1zM174 338h1v1h-1zM6 332h1v1h-1zM37 289h1v1h-1zM244 317h1v1h-1zM216 327h1v1h-1zM109 349h1v1h-1zM210 356h1v1h-1zM179 313h1v1h-1zM242 359h1v1h-1zM47 360h1v1h-1zM104 298h1v1h-1zM203 318h1v1h-1zM123 343h1v1h-1zM61 287h1v1h-1zM216 348h1v1h-1zM94 308h1v1h-1zM214 332h1v1h-1zM158 324h1v1h-1zM170 360h1v1h-1zM120 351h1v1h-1zM292 323h1v1h-1zM245 344h1v1h-1zM232 351h1v1h-1zM18 351h1v1h-1zM14 294h1v1h-1zM29 296h1v1h-1zM292 353h1v1h-1zM63 347h1v1h-1zM55 321h1v1h-1zM49 323h1v1h-1zM152 314h1v1h-1zM108 293h1v1h-1zM126 334h1v1h-1zM226 307h1v1h-1zM15 339h1v1h-1zM295 332h1v1h-1zM245 286h1v1h-1zM276 315h1v1h-1zM287 293h1v1h-1zM306 331h1v1h-1zM44 357h1v1h-1zM91 315h1v1h-1zM315 334h1v1h-1zM62 347h1v1h-1zM110 339h1v1h-1zM204 307h1v1h-1zM155 296h1v1h-1zM135 331h1v1h-1zM237 309h1v1h-1zM66 331h1v1h-1zM60 318h1v1h-1zM309 327h1v1h-1zM120 348h1v1h-1zM11 357h1v1h-1zM43 298h1v1h-1zM40 306h1v1h-1zM178 295h1v1h-1zM311 302h1v1h-1zM150 325h1v1h-1zM193 357h1v1h-1zM194 285h1v1h-1zM94 323h1v1h-1zM155 325h1v1h-1zM319 307h1v1h-1zM50 329h1v1h-1zM244 339h1v1h-1zM284 361h1v1h-1zM155 352h1v1h-1zM239 310h1v1h-1zM143 358h1v1h-1zM108 365h1v1h-1zM209 292h1v1h-1zM67 315h1v1h-1zM68 356h1v1h-1zM104 292h1v1h-1zM15 351h1v1h-1zM81 337h1v1h-1zM109 308h1v1h-1zM149 355h1v1h-1zM264 312h1v1h-1zM119 287h1v1h-1zM43 316h1v1h-1zM246 294h1v1h-1zM131 333h1v1h-1zM118 335h1v1h-1zM124 343h1v1h-1zM34 291h1v1h-1zM122 351h1v1h-1zM285 342h1v1h-1zM74 335h1v1h-1zM66 329h1v1h-1zM233 313h1v1h-1zM105 297h1v1h-1zM193 327h1v1h-1zM103 329h1v1h-1zM310 291h1v1h-1zM184 318h1v1h-1zM33 330h1v1h-1zM242 325h1v1h-1zM214 321h1v1h-1zM165 309h1v1h-1zM31 358h1v1h-1zM306 328h1v1h-1zM181 302h1v1h-1zM2 355h1v1h-1zM24 302h1v1h-1zM213 322h1v1h-1zM149 356h1v1h-1zM65 279h1v1h-1zM267 350h1v1h-1zM312 303h1v1h-1zM299 353h1v1h-1zM290 352h1v1h-1zM78 306h1v1h-1zM141 326h1v1h-1zM146 307h1v1h-1zM182 359h1v1h-1zM116 356h1v1h-1zM12 334h1v1h-1zM45 297h1v1h-1zM58 361h1v1h-1zM75 351h1v1h-1zM102 305h1v1h-1zM145 326h1v1h-1zM85 291h1v1h-1zM66 353h1v1h-1zM218 292h1v1h-1zM164 340h1v1h-1zM25 305h1v1h-1zM74 358h1v1h-1zM175 318h1v1h-1zM7 336h1v1h-1zM122 358h1v1h-1zM96 360h1v1h-1zM8 334h1v1h-1zM169 354h1v1h-1zM178 335h1v1h-1zM232 326h1v1h-1zM186 299h1v1h-1zM19 314h1v1h-1zM290 325h1v1h-1zM303 300h1v1h-1zM157 338h1v1h-1zM4 305h1v1h-1zM248 356h1v1h-1zM234 290h1v1h-1zM13 288h1v1h-1zM298 328h1v1h-1zM215 336h1v1h-1zM152 316h1v1h-1zM265 343h1v1h-1zM206 335h1v1h-1zM101 355h1v1h-1zM15 343h1v1h-1zM287 354h1v1h-1zM152 303h1v1h-1zM88 311h1v1h-1zM205 287h1v1h-1zM262 356h1v1h-1zM16 305h1v1h-1zM144 311h1v1h-1zM119 357h1v1h-1zM149 327h1v1h-1zM176 362h1v1h-1zM80 345h1v1h-1zM217 295h1v1h-1zM234 335h1v1h-1zM25 358h1v1h-1zM316 361h1v1h-1zM196 362h1v1h-1zM128 337h1v1h-1zM317 341h1v1h-1zM33 314h1v1h-1zM136 336h1v1h-1zM64 341h1v1h-1zM286 324h1v1h-1zM86 357h1v1h-1zM92 302h1v1h-1zM237 352h1v1h-1zM248 318h1v1h-1zM194 287h1v1h-1zM124 310h1v1h-1zM71 315h1v1h-1zM294 316h1v1h-1zM26 304h1v1h-1zM169 288h1v1h-1zM261 305h1v1h-1zM14 290h1v1h-1zM39 308h1v1h-1zM247 330h1v1h-1zM89 293h1v1h-1zM246 281h1v1h-1zM189 313h1v1h-1zM96 366h1v1h-1zM159 334h1v1h-1zM101 366h1v1h-1zM18 344h1v1h-1zM80 287h1v1h-1zM295 358h1v1h-1zM290 289h1v1h-1zM114 334h1v1h-1zM139 320h1v1h-1zM20 299h1v1h-1zM263 332h1v1h-1zM3 320h1v1h-1zM73 325h1v1h-1zM177 308h1v1h-1zM18 290h1v1h-1zM281 286h1v1h-1zM68 296h1v1h-1zM194 353h1v1h-1zM45 316h1v1h-1zM45 351h1v1h-1zM11 309h1v1h-1zM257 299h1v1h-1zM94 295h1v1h-1zM295 307h1v1h-1zM304 351h1v1h-1zM23 356h1v1h-1zM273 297h1v1h-1zM183 351h1v1h-1zM22 356h1v1h-1zM46 315h1v1h-1zM177 341h1v1h-1zM187 351h1v1h-1zM84 319h1v1h-1zM297 366h1v1h-1zM51 317h1v1h-1zM239 315h1v1h-1zM243 295h1v1h-1zM285 288h1v1h-1zM84 365h1v1h-1zM196 354h1v1h-1zM47 341h1v1h-1zM199 337h1v1h-1zM183 312h1v1h-1zM230 360h1v1h-1zM175 315h1v1h-1zM217 319h1v1h-1zM41 293h1v1h-1zM95 322h1v1h-1zM59 356h1v1h-1zM90 321h1v1h-1zM57 316h1v1h-1zM154 339h1v1h-1zM220 305h1v1h-1zM93 329h1v1h-1zM230 288h1v1h-1zM199 315h1v1h-1zM230 301h1v1h-1zM237 313h1v1h-1zM213 355h1v1h-1zM225 287h1v1h-1zM55 334h1v1h-1zM284 307h1v1h-1zM30 362h1v1h-1zM290 313h1v1h-1zM54 328h1v1h-1zM38 326h1v1h-1zM253 337h1v1h-1zM192 320h1v1h-1zM17 324h1v1h-1zM53 328h1v1h-1zM193 314h1v1h-1zM175 342h1v1h-1zM140 342h1v1h-1zM86 328h1v1h-1zM185 320h1v1h-1zM7 299h1v1h-1zM11 324h1v1h-1zM8 340h1v1h-1zM215 333h1v1h-1zM37 325h1v1h-1zM89 355h1v1h-1zM61 309h1v1h-1zM220 304h1v1h-1zM146 310h1v1h-1zM35 356h1v1h-1zM64 303h1v1h-1zM49 285h1v1h-1zM143 308h1v1h-1zM251 357h1v1h-1zM163 319h1v1h-1zM301 299h1v1h-1zM145 324h1v1h-1zM41 291h1v1h-1zM102 334h1v1h-1zM247 325h1v1h-1zM49 342h1v1h-1zM81 329h1v1h-1zM137 324h1v1h-1zM82 289h1v1h-1zM236 349h1v1h-1zM42 292h1v1h-1zM119 305h1v1h-1zM16 357h1v1h-1zM76 300h1v1h-1zM168 357h1v1h-1zM168 326h1v1h-1zM181 330h1v1h-1zM177 354h1v1h-1zM81 320h1v1h-1zM138 339h1v1h-1zM283 338h1v1h-1zM138 303h1v1h-1zM310 327h1v1h-1zM102 330h1v1h-1zM167 361h1v1h-1zM45 287h1v1h-1zM91 342h1v1h-1zM58 355h1v1h-1zM94 351h1v1h-1zM21 317h1v1h-1zM231 294h1v1h-1zM95 316h1v1h-1zM217 289h1v1h-1zM67 313h1v1h-1zM177 326h1v1h-1zM114 351h1v1h-1zM40 321h1v1h-1zM195 340h1v1h-1zM219 305h1v1h-1zM124 336h1v1h-1zM53 355h1v1h-1zM114 329h1v1h-1zM297 336h1v1h-1zM106 362h1v1h-1zM26 324h1v1h-1zM202 310h1v1h-1zM198 288h1v1h-1zM88 288h1v1h-1zM79 310h1v1h-1zM27 306h1v1h-1zM221 353h1v1h-1zM98 366h1v1h-1zM168 303h1v1h-1zM27 324h1v1h-1zM251 322h1v1h-1zM11 332h1v1h-1zM36 320h1v1h-1zM26 289h1v1h-1zM175 315h1v1h-1zM56 328h1v1h-1zM15 353h1v1h-1zM154 301h1v1h-1zM94 365h1v1h-1zM173 354h1v1h-1zM196 311h1v1h-1zM210 324h1v1h-1zM169 343h1v1h-1zM55 285h1v1h-1zM309 331h1v1h-1zM10 341h1v1h-1zM163 356h1v1h-1zM157 330h1v1h-1zM65 313h1v1h-1zM60 326h1v1h-1zM87 310h1v1h-1zM213 288h1v1h-1zM208 304h1v1h-1zM100 305h1v1h-1zM192 304h1v1h-1zM254 214h1v1h-1zM204 270h1v1h-1zM119 202h1v1h-1zM40 274h1v1h-1zM134 190h1v1h-1zM201 254h1v1h-1zM31 191h1v1h-1zM268 206h1v1h-1zM70 200h1v1h-1zM8 260h1v1h-1zM105 179h1v1h-1zM16 261h1v1h-1zM234 199h1v1h-1zM89 270h1v1h-1zM271 178h1v1h-1zM288 219h1v1h-1zM32 201h1v1h-1zM208 192h1v1h-1zM242 226h1v1h-1zM310 230h1v1h-1zM144 212h1v1h-1zM251 217h1v1h-1z" fill="#c0c050"/><path d="M0 55.6 1 55.6 2 55.6 3 55.6 4 55.6 5 55.6 6 55.6 7 56.0 8 56.0 9 56.0 10 56.0 11 56.0 12 56.0 13 56.0 14 55.6 15 55.6 16 55.6 17 55.6 18 55.6 19 55.6 20 55.6 21 56.4 22 57.1 23 56.4 24 55.6 25 55.6 26 55.6 27 55.6 28 56.0 29 56.0 30 56.0 31 56.0 32 56.0 33 56.0 34 56.0 35 55.6 36 55.6 37 55.6 38 55.6 39 55.6 40 55.6 41 55.6 42 55.6 43 56.9 44 58.1 45 56.9 46 55.6 47 55.6 48 55.6 49 56.0 50 56.0 51 56.0 52 56.0 53 56.0 54 56.0 55 56.0 56 55.6 57 55.6 58 55.6 59 55.6 60 55.6 61 55.6 62 55.6 63 55.6 64 55.6 65 58.3 66 60.9 67 63.6 68 60.9 69 58.3 70 56.0 71 56.0 72 56.0 73 56.0 74 56.0 75 56.0 76 56.0 77 55.6 78 55.6 79 55.6 80 55.6 81 55.6 82 55.6 83 55.6 84 55.6 85 55.6 86 55.6 87 55.6 88 55.6 89 55.6 90 55.6 91 56.0 92 58.0 93 60.0 94 62.0 95 60.0 96 58.0 97 56.0 98 55.6 99 55.6 100 55.6 101 55.6 102 55.6 103 55.6 104 55.6 105 55.6 106 55.6 107 55.6 108 55.6 109 55.6 110 55.6 111 55.6 112 56.0 113 56.0 114 56.0 115 56.0 116 56.0 117 56.0 118 56.0 119 55.6 120 55.6 121 55.6 122 55.6 123 55.6 124 55.6 125 55.6 126 55.6 127 55.6 128 55.6 129 55.6 130 55.6 131 55.6 132 55.6 133 56.0 134 56.0 135 56.0 136 56.0 137 56.0 138 56.0 139 56.0 140 55.6 141 58.7 142 61.7 143 64.8 144 67.9 145 70.9 146 74.0 147 66.4 148 58.8 149 51.2 150 43.6 151 43.6 152 43.6 153 43.6 154 43.6 155 46.3 156 48.9 157 51.6 158 48.9 159 46.3 160 43.6 161 43.6 162 43.6 163 43.6 164 43.6 165 43.6 166 44.0 167 44.0 168 44.0 169 44.0 170 44.0 171 44.0 172 44.0 173 44.0 174 45.7 175 46.9 176 48.6 177 46.9 178 45.3 179 43.6 180 43.6 181 43.6 182 43.6 183 43.6 184 43.6 185 43.6 186 43.6 187 43.6 188 43.6 189 44.4 190 45.1 191 44.4 192 43.6 193 43.6 194 43.6 195 43.6 196 43.6 197 43.6 198 43.6 199 43.6 200 43.6 201 43.6 202 44.0 203 44.0 204 44.0 205 44.0 206 44.0 207 44.0 208 44.0 209 44.0 210 44.0 211 44.4 212 45.1 213 44.4 214 43.6 215 43.6 216 43.6 217 43.6 218 43.6 219 44.4 220 45.1 221 44.4 222 43.6 223 43.6 224 43.6 225 43.6 226 43.6 227 44.6 228 45.6 229 44.6 230 43.6 231 43.6 232 43.6 233 43.6 234 43.6 235 43.6 236 43.6 237 43.6 238 44.0 239 44.0 240 44.0 241 44.0 242 44.0 243 44.0 244 44.0 245 44.0 246 44.0 247 43.6 248 43.6 249 46.3 250 48.9 251 51.6 252 48.9 253 46.3 254 43.6 255 43.6 256 43.6 257 43.6 258 43.6 259 43.6 260 43.6 261 43.6 262 43.6 263 43.6 264 43.6 265 43.6 266 43.6 267 43.6 268 43.6 269 43.6 270 43.6 271 43.6 272 43.6 273 43.6 274 44.0 275 44.0 276 44.0 277 44.0 278 44.0 279 44.0 280 44.0 281 44.0 282 44.0 283 43.6 284 43.6 285 43.6 286 43.6 287 43.6 288 43.6 289 43.6 290 43.6 291 43.6 292 43.6 293 43.6 294 43.6 295 43.6 296 43.6 297 43.6 298 43.6 299 43.6 300 43.6 301 46.3 302 48.9 303 51.6 304 48.9 305 48.6 306 48.3 307 50.6 308 48.3 309 45.9 310 44.0 311 44.0 312 44.0 313 44.0 314 44.0 315 44.0 316 44.0 317 44.0 318 44.0 319 43.6 320 43.6 321 43.6 322 43.6" stroke="#36a8da" stroke-width="1" fill="none" shape-rendering="auto"/><rect x="0.5" y="0.5" width="322" height="388" fill="none" stroke="#000" stroke-width="1"/></svg>

<!-- side panel -->
<div class="a" style="left:875px;top:235px;width:62px;height:17px;background:linear-gradient(#f2f2f2,#e2e2e2);border:1px solid #adadad"></div>
<div class="t sp" style="left:895px;top:239px">Start</div>
<div class="a hl" style="top:261px"></div>
<div class="a" style="left:872px;top:265px;width:11px;height:11px;border-radius:50%;border:1px solid #333;background:#fff"></div>
<div class="a" style="left:875px;top:268px;width:5px;height:5px;border-radius:50%;background:#222"></div>
<div class="t sp" style="left:886px;top:266px">Read</div>
<div class="a" style="left:872px;top:279px;width:11px;height:11px;border-radius:50%;border:1px solid #333;background:#fff"></div>
<div class="t sp" style="left:886px;top:280px">Write</div>
<div class="a hl" style="top:293px"></div>
<div class="cb" style="top:300px"><svg style="position:absolute;left:0;top:0" width="9" height="9" viewBox="0 0 9 9"><path d="M1.3 4.3L3.4 6.6L7.8 1.5" stroke="#000" stroke-width="1.7" fill="none"/></svg></div>
<div class="t sp" style="left:886px;top:300px">Short stroke</div>
<div class="a" style="left:872px;top:316px;width:51px;height:17px;border:1px solid #b8b8b8;background:#fff"></div>
<div class="a" style="left:909px;top:317px;width:13px;height:15px;background:#eee;border-left:1px solid #ccc"></div>
<svg class="a" style="left:911px;top:318px" width="9" height="13" viewBox="0 0 9 13"><path d="M1.5 5L4.5 2L7.5 5M1.5 8L4.5 11L7.5 8" stroke="#333" stroke-width="1.2" fill="none"/></svg>
<div class="t sp" style="left:875px;top:320px">40</div>
<div class="t sp" style="left:932px;top:320px">gB</div>
<div class="cb" style="top:342px"><svg style="position:absolute;left:0;top:0" width="9" height="9" viewBox="0 0 9 9"><path d="M1.3 4.3L3.4 6.6L7.8 1.5" stroke="#000" stroke-width="1.7" fill="none"/></svg></div>
<div class="t sp" style="left:886px;top:342px">Transfer rate</div>
<div class="a hl" style="top:353px"></div>
<div class="t sp" style="left:872px;top:357px">Minimum</div>
<div class="bx" style="top:369px;color:#30b8f0">121.5 MB/s</div>
<div class="t sp" style="left:872px;top:384px">Maximum</div>
<div class="bx" style="top:396px;color:#30b8f0">133.2 MB/s</div>
<div class="t sp" style="left:872px;top:409px">Average</div>
<div class="bx" style="top:422px;color:#30b8f0">130.8 MB/s</div>
<div class="a hl" style="top:440px"></div>
<div class="cb" style="top:446px"><svg style="position:absolute;left:0;top:0" width="9" height="9" viewBox="0 0 9 9"><path d="M1.3 4.3L3.4 6.6L7.8 1.5" stroke="#000" stroke-width="1.7" fill="none"/></svg></div>
<div class="t sp" style="left:886px;top:446px">Access time</div>
<div class="bx" style="top:459px;color:#f0f030">10.4 ms</div>
<div class="cb" style="top:473px"><svg style="position:absolute;left:0;top:0" width="9" height="9" viewBox="0 0 9 9"><path d="M1.3 4.3L3.4 6.6L7.8 1.5" stroke="#000" stroke-width="1.7" fill="none"/></svg></div>
<div class="t sp" style="left:886px;top:474px">Burst rate</div>
<div class="bx" style="top:486px;color:#fff">180.4 MB/s</div>
<div class="t sp" style="left:872px;top:502px">CPU usage</div>
<div class="bx" style="top:514px;color:#fff">27.5%</div>


</body></html>
